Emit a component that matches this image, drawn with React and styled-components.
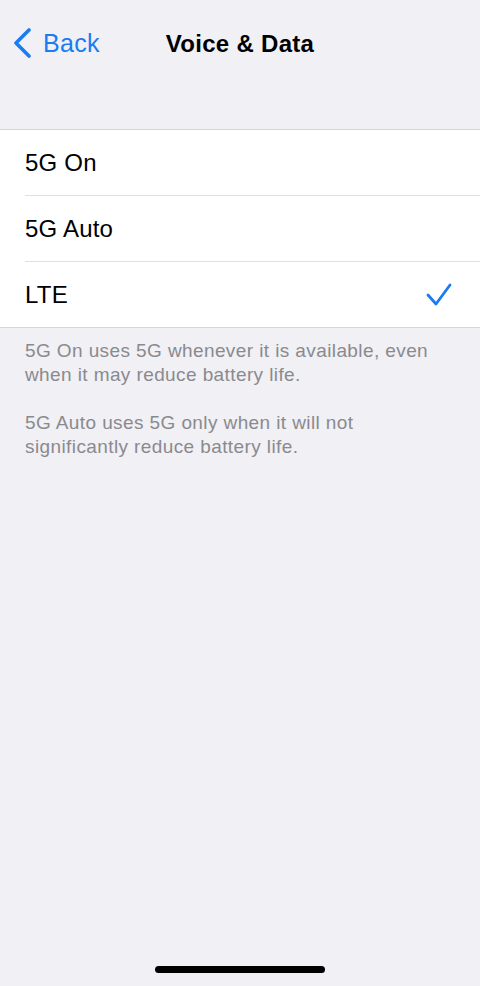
import React from 'react'
import styled, { createGlobalStyle } from 'styled-components'

const GlobalStyle = createGlobalStyle`
  html, body {
    margin: 0;
    padding: 0;
    background: #f0f0f5;
  }
  body {
    font-family: "Liberation Sans", Arial, sans-serif;
    -webkit-font-smoothing: antialiased;
  }
`

const Screen = styled.div`
  display: flex;
  flex-direction: column;
  width: 480px;
  height: 986px;
  background: #f0f0f5;
  overflow: hidden;
`

const NavBar = styled.div`
  position: relative;
  display: flex;
  align-items: center;
  justify-content: center;
  height: 88px;
`

const BackButton = styled.button`
  position: absolute;
  left: 12px;
  top: 28px;
  display: flex;
  align-items: center;
  gap: 11px;
  padding: 0;
  border: 0;
  background: none;
  color: #1a7cf2;
  font: 25px "Liberation Sans", Arial, sans-serif;
  letter-spacing: 0.3px;
  cursor: pointer;
`

const Title = styled.h1`
  margin: 0;
  font-size: 24px;
  font-weight: 700;
  letter-spacing: 0.3px;
  color: #000;
`

const Group = styled.ul`
  list-style: none;
  margin: 41px 0 0;
  padding: 0 0 0 25px;
  background: #fff;
  border-top: 1px solid #d6d6da;
  border-bottom: 1px solid #d6d6da;
`

const Row = styled.li`
  display: flex;
  align-items: center;
  justify-content: space-between;
  height: 65px;
  padding-right: 28px;
  font-size: 24px;
  letter-spacing: 0.2px;
  color: #000;
  border-top: ${p => (p.first ? 'none' : '1px solid #e0e0e4')};
`

const Footer = styled.div`
  display: flex;
  flex-direction: column;
  gap: 24px;
  padding: 11px 25px 0;
`

const Note = styled.p`
  margin: 0;
  font-size: 19px;
  line-height: 24px;
  letter-spacing: 0.4px;
  color: #8a8a8e;
`

const HomeBar = styled.div`
  align-self: center;
  width: 170px;
  height: 7px;
  margin: auto 0 13px;
  border-radius: 4px;
  background: #000;
`

const Chevron = () => (
  <svg width="20" height="30" viewBox="0 0 20 30">
    <polyline points="17,2 4,15 17,28" fill="none" stroke="currentColor"
      strokeWidth="3.6" strokeLinecap="round" strokeLinejoin="round" />
  </svg>
)

const Check = () => (
  <svg width="26" height="24" viewBox="0 0 26 24">
    <polyline points="2,12 10,21 24,2" fill="none" stroke="#1a7cf2"
      strokeWidth="2.8" strokeLinecap="round" strokeLinejoin="round" />
  </svg>
)

const options = ['5G On', '5G Auto', 'LTE']

export default function App() {
  const selected = 'LTE'
  return (
    <Screen>
      <GlobalStyle />
      <NavBar>
        <BackButton>
          <Chevron />
          Back
        </BackButton>
        <Title>Voice &amp; Data</Title>
      </NavBar>
      <Group>
        {options.map((o, i) => (
          <Row key={o} first={i === 0}>
            {o}
            {o === selected && <Check />}
          </Row>
        ))}
      </Group>
      <Footer>
        <Note>5G On uses 5G whenever it is available, even when it may reduce battery life.</Note>
        <Note>5G Auto uses 5G only when it will not significantly reduce battery life.</Note>
      </Footer>
      <HomeBar />
    </Screen>
  )
}
